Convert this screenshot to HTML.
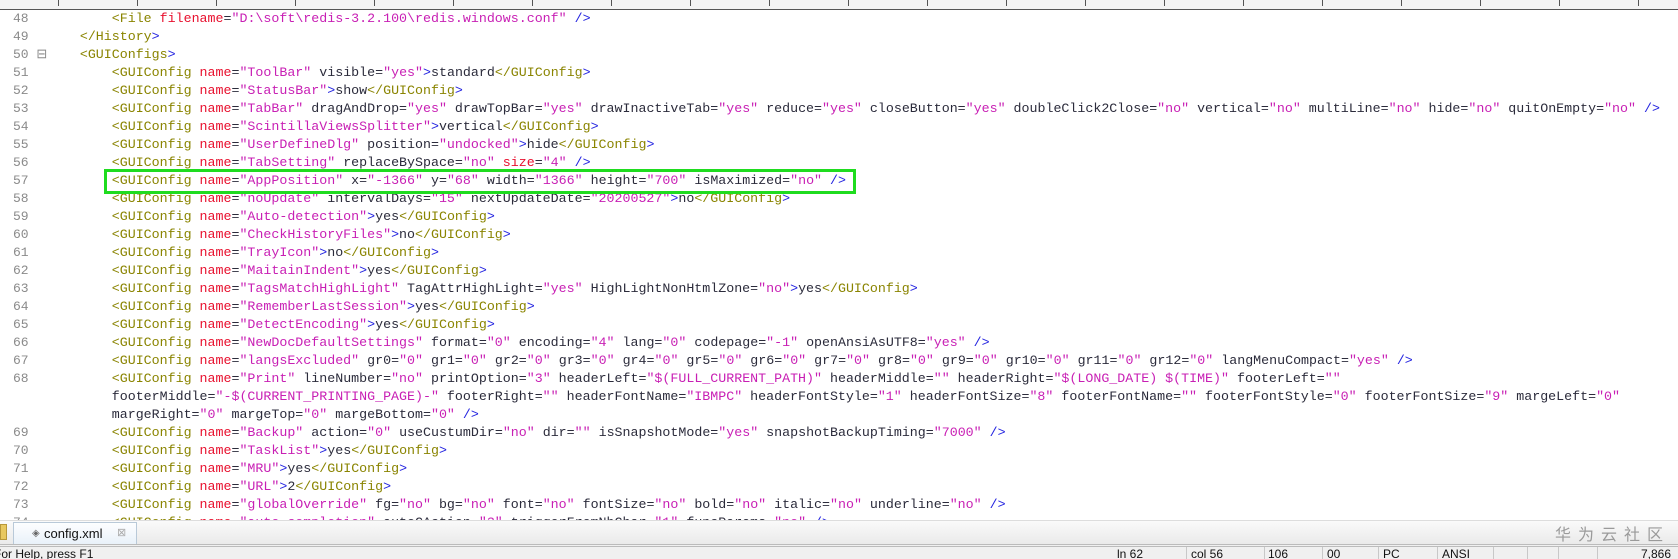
<!DOCTYPE html>
<html><head><meta charset="utf-8">
<style>
*{margin:0;padding:0;box-sizing:border-box}
html,body{width:1678px;height:559px;overflow:hidden;background:#fff}
body{position:relative;font-family:"Liberation Mono",monospace}
#ruler{position:absolute;left:0;top:0;width:1678px;height:10px;background:#f4f4f4;border-bottom:1px solid #555}
#ruler i{position:absolute;top:0;width:1px;height:6px;background:#555}
#ed{position:absolute;left:0;top:10px;width:1678px;height:510px;overflow:hidden}
.r{position:absolute;left:0;height:18px;line-height:18px;font-size:13.3px;white-space:pre;width:1678px}
.n{position:absolute;left:13px;color:#8a8a8a;font-size:13px}
.c{position:absolute;left:16px;color:#2b2b3b}
em,i,u,b{font-style:normal;text-decoration:none;font-weight:normal}
em{color:#8a8400}
i{color:#e8102e}
u{color:#c81fb4}
b{color:#2424e0}
#box{position:absolute;left:104px;top:169px;width:752px;height:25px;border:3px solid #1fdc1f}
#tabs{position:absolute;left:0;top:520px;width:1678px;height:24px;background:linear-gradient(#fafafa,#eaeaea);border-top:1px solid #ddd}
#tab{position:absolute;left:13px;top:1px;width:124px;height:22px;background:linear-gradient(#fdfeff,#e9f1f9);border:1px solid #b9c9d8;border-bottom:none;font-family:"Liberation Sans",sans-serif;font-size:13px;line-height:21px;color:#111}
#status{position:absolute;left:0;top:544px;width:1678px;height:15px;background:#f0f0f0;border-top:3px double #bbb;font-family:"Liberation Sans",sans-serif;font-size:12px;line-height:15px;color:#111}
#status span{position:absolute;top:0}
#status .s{position:absolute;top:0;width:1px;height:15px;background:#c8c8c8}
#wm{position:absolute;left:1555px;top:521px;font-family:"Noto Sans CJK SC",sans-serif;font-size:16px;color:#9a9a9a;letter-spacing:7px}
</style></head><body>
<div id="ruler">
<i style="left:58px"></i><i style="left:137px"></i><i style="left:216px"></i><i style="left:295px"></i><i style="left:374px"></i><i style="left:453px"></i><i style="left:532px"></i><i style="left:611px"></i><i style="left:690px"></i><i style="left:769px"></i><i style="left:848px"></i><i style="left:927px"></i><i style="left:1006px"></i><i style="left:1085px"></i><i style="left:1164px"></i><i style="left:1243px"></i><i style="left:1322px"></i><i style="left:1401px"></i><i style="left:1480px"></i><i style="left:1559px"></i><i style="left:1638px"></i>
</div>
<div id="ed">
<div class="r" style="top:0"><span class="n">48</span><span class="c">            <em>&lt;File</em> <i>filename</i>=<u>"D:\soft\redis-3.2.100\redis.windows.conf"</u> <b>/&gt;</b></span></div>
<div class="r" style="top:18px"><span class="n">49</span><span class="c">        <em>&lt;/History</em><b>&gt;</b></span></div>
<div class="r" style="top:36px"><span class="n">50 ⊟</span><span class="c">        <em>&lt;GUIConfigs</em><b>&gt;</b></span></div>
<div class="r" style="top:54px"><span class="n">51</span><span class="c">            <em>&lt;GUIConfig</em> <i>name</i>=<u>"ToolBar"</u> visible=<u>"yes"</u><b>&gt;</b>standard<em>&lt;/GUIConfig</em><b>&gt;</b></span></div>
<div class="r" style="top:72px"><span class="n">52</span><span class="c">            <em>&lt;GUIConfig</em> <i>name</i>=<u>"StatusBar"</u><b>&gt;</b>show<em>&lt;/GUIConfig</em><b>&gt;</b></span></div>
<div class="r" style="top:90px"><span class="n">53</span><span class="c">            <em>&lt;GUIConfig</em> <i>name</i>=<u>"TabBar"</u> dragAndDrop=<u>"yes"</u> drawTopBar=<u>"yes"</u> drawInactiveTab=<u>"yes"</u> reduce=<u>"yes"</u> closeButton=<u>"yes"</u> doubleClick2Close=<u>"no"</u> vertical=<u>"no"</u> multiLine=<u>"no"</u> hide=<u>"no"</u> quitOnEmpty=<u>"no"</u> <b>/&gt;</b></span></div>
<div class="r" style="top:108px"><span class="n">54</span><span class="c">            <em>&lt;GUIConfig</em> <i>name</i>=<u>"ScintillaViewsSplitter"</u><b>&gt;</b>vertical<em>&lt;/GUIConfig</em><b>&gt;</b></span></div>
<div class="r" style="top:126px"><span class="n">55</span><span class="c">            <em>&lt;GUIConfig</em> <i>name</i>=<u>"UserDefineDlg"</u> position=<u>"undocked"</u><b>&gt;</b>hide<em>&lt;/GUIConfig</em><b>&gt;</b></span></div>
<div class="r" style="top:144px"><span class="n">56</span><span class="c">            <em>&lt;GUIConfig</em> <i>name</i>=<u>"TabSetting"</u> replaceBySpace=<u>"no"</u> <i>size</i>=<u>"4"</u> <b>/&gt;</b></span></div>
<div class="r" style="top:162px"><span class="n">57</span><span class="c">            <em>&lt;GUIConfig</em> <i>name</i>=<u>"AppPosition"</u> x=<u>"-1366"</u> y=<u>"68"</u> width=<u>"1366"</u> height=<u>"700"</u> isMaximized=<u>"no"</u> <b>/&gt;</b></span></div>
<div class="r" style="top:180px"><span class="n">58</span><span class="c">            <em>&lt;GUIConfig</em> <i>name</i>=<u>"noUpdate"</u> intervalDays=<u>"15"</u> nextUpdateDate=<u>"20200527"</u><b>&gt;</b>no<em>&lt;/GUIConfig</em><b>&gt;</b></span></div>
<div class="r" style="top:198px"><span class="n">59</span><span class="c">            <em>&lt;GUIConfig</em> <i>name</i>=<u>"Auto-detection"</u><b>&gt;</b>yes<em>&lt;/GUIConfig</em><b>&gt;</b></span></div>
<div class="r" style="top:216px"><span class="n">60</span><span class="c">            <em>&lt;GUIConfig</em> <i>name</i>=<u>"CheckHistoryFiles"</u><b>&gt;</b>no<em>&lt;/GUIConfig</em><b>&gt;</b></span></div>
<div class="r" style="top:234px"><span class="n">61</span><span class="c">            <em>&lt;GUIConfig</em> <i>name</i>=<u>"TrayIcon"</u><b>&gt;</b>no<em>&lt;/GUIConfig</em><b>&gt;</b></span></div>
<div class="r" style="top:252px"><span class="n">62</span><span class="c">            <em>&lt;GUIConfig</em> <i>name</i>=<u>"MaitainIndent"</u><b>&gt;</b>yes<em>&lt;/GUIConfig</em><b>&gt;</b></span></div>
<div class="r" style="top:270px"><span class="n">63</span><span class="c">            <em>&lt;GUIConfig</em> <i>name</i>=<u>"TagsMatchHighLight"</u> TagAttrHighLight=<u>"yes"</u> HighLightNonHtmlZone=<u>"no"</u><b>&gt;</b>yes<em>&lt;/GUIConfig</em><b>&gt;</b></span></div>
<div class="r" style="top:288px"><span class="n">64</span><span class="c">            <em>&lt;GUIConfig</em> <i>name</i>=<u>"RememberLastSession"</u><b>&gt;</b>yes<em>&lt;/GUIConfig</em><b>&gt;</b></span></div>
<div class="r" style="top:306px"><span class="n">65</span><span class="c">            <em>&lt;GUIConfig</em> <i>name</i>=<u>"DetectEncoding"</u><b>&gt;</b>yes<em>&lt;/GUIConfig</em><b>&gt;</b></span></div>
<div class="r" style="top:324px"><span class="n">66</span><span class="c">            <em>&lt;GUIConfig</em> <i>name</i>=<u>"NewDocDefaultSettings"</u> format=<u>"0"</u> encoding=<u>"4"</u> lang=<u>"0"</u> codepage=<u>"-1"</u> openAnsiAsUTF8=<u>"yes"</u> <b>/&gt;</b></span></div>
<div class="r" style="top:342px"><span class="n">67</span><span class="c">            <em>&lt;GUIConfig</em> <i>name</i>=<u>"langsExcluded"</u> gr0=<u>"0"</u> gr1=<u>"0"</u> gr2=<u>"0"</u> gr3=<u>"0"</u> gr4=<u>"0"</u> gr5=<u>"0"</u> gr6=<u>"0"</u> gr7=<u>"0"</u> gr8=<u>"0"</u> gr9=<u>"0"</u> gr10=<u>"0"</u> gr11=<u>"0"</u> gr12=<u>"0"</u> langMenuCompact=<u>"yes"</u> <b>/&gt;</b></span></div>
<div class="r" style="top:360px"><span class="n">68</span><span class="c">            <em>&lt;GUIConfig</em> <i>name</i>=<u>"Print"</u> lineNumber=<u>"no"</u> printOption=<u>"3"</u> headerLeft=<u>"$(FULL_CURRENT_PATH)"</u> headerMiddle=<u>""</u> headerRight=<u>"$(LONG_DATE) $(TIME)"</u> footerLeft=<u>""</u></span></div>
<div class="r" style="top:378px"><span class="c">            footerMiddle=<u>"-$(CURRENT_PRINTING_PAGE)-"</u> footerRight=<u>""</u> headerFontName=<u>"IBMPC"</u> headerFontStyle=<u>"1"</u> headerFontSize=<u>"8"</u> footerFontName=<u>""</u> footerFontStyle=<u>"0"</u> footerFontSize=<u>"9"</u> margeLeft=<u>"0"</u></span></div>
<div class="r" style="top:396px"><span class="c">            margeRight=<u>"0"</u> margeTop=<u>"0"</u> margeBottom=<u>"0"</u> <b>/&gt;</b></span></div>
<div class="r" style="top:414px"><span class="n">69</span><span class="c">            <em>&lt;GUIConfig</em> <i>name</i>=<u>"Backup"</u> action=<u>"0"</u> useCustumDir=<u>"no"</u> dir=<u>""</u> isSnapshotMode=<u>"yes"</u> snapshotBackupTiming=<u>"7000"</u> <b>/&gt;</b></span></div>
<div class="r" style="top:432px"><span class="n">70</span><span class="c">            <em>&lt;GUIConfig</em> <i>name</i>=<u>"TaskList"</u><b>&gt;</b>yes<em>&lt;/GUIConfig</em><b>&gt;</b></span></div>
<div class="r" style="top:450px"><span class="n">71</span><span class="c">            <em>&lt;GUIConfig</em> <i>name</i>=<u>"MRU"</u><b>&gt;</b>yes<em>&lt;/GUIConfig</em><b>&gt;</b></span></div>
<div class="r" style="top:468px"><span class="n">72</span><span class="c">            <em>&lt;GUIConfig</em> <i>name</i>=<u>"URL"</u><b>&gt;</b>2<em>&lt;/GUIConfig</em><b>&gt;</b></span></div>
<div class="r" style="top:486px"><span class="n">73</span><span class="c">            <em>&lt;GUIConfig</em> <i>name</i>=<u>"globalOverride"</u> fg=<u>"no"</u> bg=<u>"no"</u> font=<u>"no"</u> fontSize=<u>"no"</u> bold=<u>"no"</u> italic=<u>"no"</u> underline=<u>"no"</u> <b>/&gt;</b></span></div>
<div class="r" style="top:504px"><span class="n">74</span><span class="c">            <em>&lt;GUIConfig</em> <i>name</i>=<u>"auto-completion"</u> autoCAction=<u>"3"</u> triggerFromNbChar=<u>"1"</u> funcParams=<u>"no"</u> <b>/&gt;</b></span></div>
</div>
<div id="box"></div>
<div id="tabs">
<div style="position:absolute;left:0;top:3px;width:7px;height:16px;background:#e8c860;border:1px solid #b8983a"></div>
<div id="tab"><span style="position:absolute;left:18px;color:#666;font-size:10px">◈</span><span style="position:absolute;left:30px">config.xml</span><span style="position:absolute;left:103px;color:#aaa;font-size:11px">⊠</span></div>
</div>
<div id="wm">华为云社区</div>
<div id="status">
<span style="left:-6px">For Help, press F1</span>
<span style="left:1117px">ln 62</span><div class="s" style="left:1186px"></div>
<span style="left:1191px">col 56</span><div class="s" style="left:1264px"></div>
<span style="left:1268px">106</span><div class="s" style="left:1322px"></div>
<span style="left:1327px">00</span><div class="s" style="left:1378px"></div>
<span style="left:1383px">PC</span><div class="s" style="left:1437px"></div>
<span style="left:1442px">ANSI</span><div class="s" style="left:1493px"></div>
<div class="s" style="left:1527px"></div><div class="s" style="left:1558px"></div><div class="s" style="left:1597px"></div>
<span style="left:1641px">7,866</span>
</div>
</body></html>
